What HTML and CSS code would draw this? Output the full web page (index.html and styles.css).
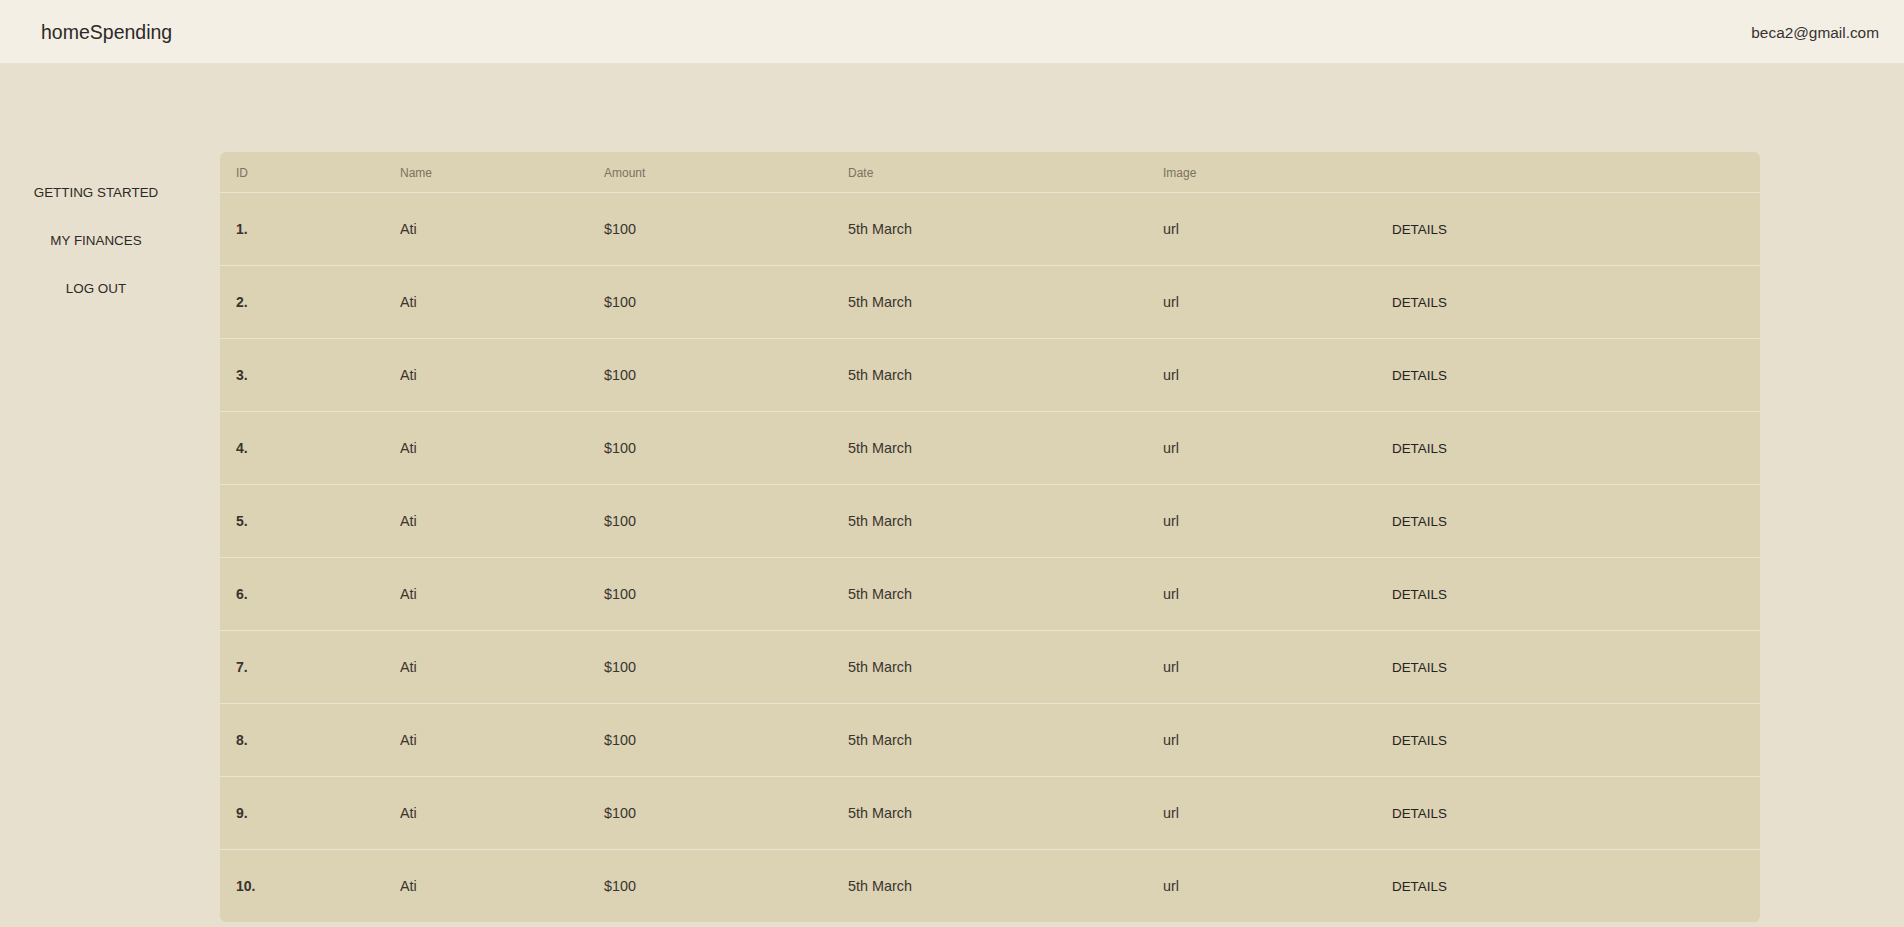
FILE: index.html
```html
<!DOCTYPE html>
<html lang="en">
<head>
<meta charset="utf-8">
<title>homeSpending</title>
<link rel="stylesheet" href="styles.css">
</head>
<body>
<header class="topbar">
  <div class="brand">homeSpending</div>
  <div class="user">beca2@gmail.com</div>
</header>
<div class="layout">
  <nav class="sidebar">
    <a class="nav-item" href="#">GETTING STARTED</a>
    <a class="nav-item" href="#">MY FINANCES</a>
    <a class="nav-item" href="#">LOG OUT</a>
  </nav>
  <main class="content">
    <div class="table">
      <div class="row head">
        <div>ID</div><div>Name</div><div>Amount</div><div>Date</div><div>Image</div><div></div>
      </div>
      <div class="row"><div class="id">1.</div><div>Ati</div><div>$100</div><div>5th March</div><div>url</div><div class="details">DETAILS</div></div>
      <div class="row"><div class="id">2.</div><div>Ati</div><div>$100</div><div>5th March</div><div>url</div><div class="details">DETAILS</div></div>
      <div class="row"><div class="id">3.</div><div>Ati</div><div>$100</div><div>5th March</div><div>url</div><div class="details">DETAILS</div></div>
      <div class="row"><div class="id">4.</div><div>Ati</div><div>$100</div><div>5th March</div><div>url</div><div class="details">DETAILS</div></div>
      <div class="row"><div class="id">5.</div><div>Ati</div><div>$100</div><div>5th March</div><div>url</div><div class="details">DETAILS</div></div>
      <div class="row"><div class="id">6.</div><div>Ati</div><div>$100</div><div>5th March</div><div>url</div><div class="details">DETAILS</div></div>
      <div class="row"><div class="id">7.</div><div>Ati</div><div>$100</div><div>5th March</div><div>url</div><div class="details">DETAILS</div></div>
      <div class="row"><div class="id">8.</div><div>Ati</div><div>$100</div><div>5th March</div><div>url</div><div class="details">DETAILS</div></div>
      <div class="row"><div class="id">9.</div><div>Ati</div><div>$100</div><div>5th March</div><div>url</div><div class="details">DETAILS</div></div>
      <div class="row"><div class="id">10.</div><div>Ati</div><div>$100</div><div>5th March</div><div>url</div><div class="details">DETAILS</div></div>
    </div>
  </main>
</div>
</body>
</html>
```
FILE: styles.css
```css
* { box-sizing: border-box; }
html, body { margin: 0; padding: 0; }
body {
  background: #e8e0ce;
  font-family: "Liberation Sans", Arial, sans-serif;
  color: #2f2b26;
}
.topbar {
  height: 63px;
  background: #f4efe5;
  display: flex;
  align-items: center;
  justify-content: space-between;
  padding: 2px 25px 0 41px;
}
.brand {
  font-size: 19.5px;
  color: #2c2a27;
}
.user {
  font-size: 15.4px;
  color: #35332f;
}
.layout {
  display: flex;
  padding-top: 89px;
}
.sidebar {
  width: 192px;
  flex: none;
  display: flex;
  flex-direction: column;
  align-items: center;
  gap: 28px;
  padding-top: 31px;
}
.nav-item {
  display: block;
  line-height: 20px;
  font-size: 13.4px;
  color: #2c2a26;
  text-decoration: none;
}
.content {
  flex: none;
  width: 1540px;
  margin-left: 28px;
}
.table {
  background: #dcd2b4;
  border-radius: 6px;
  overflow: hidden;
}
.row {
  display: grid;
  grid-template-columns: 164px 204px 244px 315px 229px 1fr;
  align-items: center;
  padding: 0 16px;
  height: 73px;
  border-bottom: 1px solid #ece4d0;
  font-size: 14.4px;
  color: #3a352e;
}
.row:last-child { border-bottom: none; height: 72px; }
.row.head {
  height: 41px;
  padding-top: 2px;
  font-size: 12px;
  color: #7b7362;
}
.id {
  font-weight: 700;
  font-size: 14px;
  color: #3a342c;
}
.details {
  font-size: 13.4px;
  color: #26231f;
}
```
